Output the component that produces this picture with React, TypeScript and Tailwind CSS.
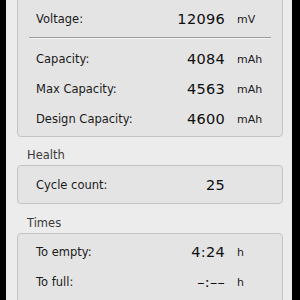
import React from 'react';

interface Row {
  label: string;
  value: string;
  unit?: string;
}

const font = { fontFamily: '"DejaVu Sans", "Liberation Sans", sans-serif' };

const StatRow: React.FC<{ row: Row }> = ({ row }) => (
  <div className="flex h-[30px] items-center pl-[18px]">
    <span className="w-[120px] text-[11.5px] text-[#1a1a1a]">{row.label}</span>
    <span className="w-[69px] text-right text-[14.5px] tracking-[0.3px] text-[#0e0e0e]">{row.value}</span>
    <span className="ml-[12px] text-[11px] text-[#1a1a1a]">{row.unit ?? ''}</span>
  </div>
);

const capacityRows: Row[] = [
  { label: 'Capacity:', value: '4084', unit: 'mAh' },
  { label: 'Max Capacity:', value: '4563', unit: 'mAh' },
  { label: 'Design Capacity:', value: '4600', unit: 'mAh' },
];

const timeRows: Row[] = [
  { label: 'To empty:', value: '4:24', unit: 'h' },
  { label: 'To full:', value: '–:––', unit: 'h' },
];

export default function App() {
  return (
    <div className="flex h-[300px] w-[300px] overflow-hidden bg-black" style={font}>
      <div className="ml-[6px] h-[300px] w-[286px] overflow-hidden bg-[#ececec]">
        <div className="ml-[11px] w-[266px]">
          {/* Electrical */}
          <div className="mt-[-10px] rounded-[4px] border border-[#c4c4c4] bg-[#e4e4e4] pt-[14px] pb-[1px]">
            <StatRow row={{ label: 'Voltage:', value: '12096', unit: 'mV' }} />
            <div className="mx-[11px] mt-[2px] h-px bg-[#9c9c9c]" />
            <div className="mx-[11px] h-px bg-[#f4f4f4]" />
            <div className="mt-[6px]">
              {capacityRows.map((r) => (
                <StatRow key={r.label} row={r} />
              ))}
            </div>
          </div>

          {/* Health */}
          <div className="pl-[10px] pt-[11px] pb-[3px] text-[11.5px] leading-[14px] text-[#3b3b3b]">Health</div>
          <div className="rounded-[4px] border border-[#c4c4c4] bg-[#e4e4e4] pt-[5px] pb-[2px]">
            <StatRow row={{ label: 'Cycle count:', value: '25' }} />
          </div>

          {/* Times */}
          <div className="pl-[10px] pt-[12px] pb-[3px] text-[11.5px] leading-[14px] text-[#3b3b3b]">Times</div>
          <div className="rounded-[4px] border border-[#c4c4c4] bg-[#e4e4e4] pt-[4px] pb-[20px]">
            {timeRows.map((r) => (
              <StatRow key={r.label} row={r} />
            ))}
          </div>
        </div>
      </div>
    </div>
  );
}
